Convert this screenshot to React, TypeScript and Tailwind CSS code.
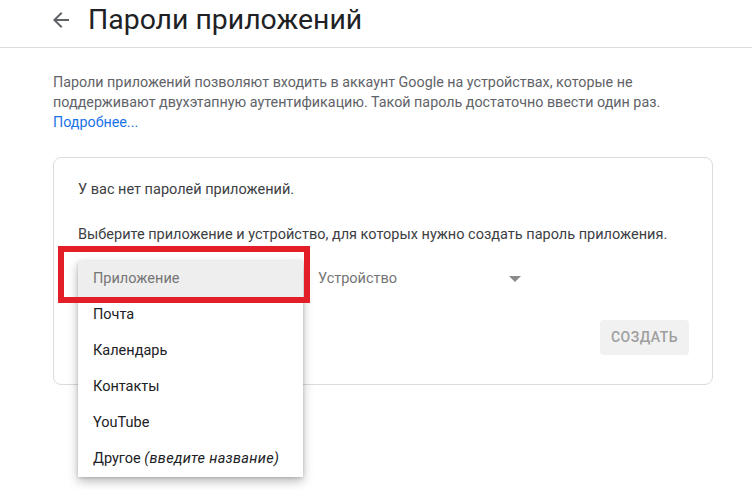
import React from "react";

export default function App() {
  const items = ["Почта", "Календарь", "Контакты", "YouTube"];
  return (
    <div className="w-[752px] h-[490px] bg-white overflow-hidden font-['Roboto',_'Noto_Sans',_sans-serif]">
      <header className="h-[48px] border-b border-[#dadce0] flex items-start pl-[49px] pt-[2px]">
        <svg width="24" height="24" viewBox="0 0 24 24" className="mt-[6px] shrink-0">
          <path d="M20 11H7.83l5.59-5.59L12 4l-8 8 8 8 1.41-1.41L7.83 13H20v-2z" fill="#5f6368" />
        </svg>
        <h1 className="ml-[15px] text-[28.4px] leading-[36px] text-[#202124] font-normal">Пароли приложений</h1>
      </header>
      <main className="pl-[53px] pt-[24px]">
        <p className="w-[660px] text-[14.3px] leading-5 text-[#5f6368]">
          Пароли приложений позволяют входить в аккаунт Google на устройствах, которые не поддерживают двухэтапную аутентификацию. Такой пароль достаточно ввести один раз.
          <br />
          <a className="text-[#1a73e8]">Подробнее...</a>
        </p>
        <section className="mt-[25px] w-[660px] border border-[#dadce0] rounded-lg pt-[22px] pl-[24px] pr-[23px] pb-[29px]">
          <p className="text-[14.5px] leading-5 text-[#3c4043]">У вас нет паролей приложений.</p>
          <p className="mt-[25px] text-[14.5px] leading-5 text-[#3c4043]">
            Выберите приложение и устройство, для которых нужно создать пароль приложения.
          </p>
          <div className="mt-[14px] h-[40px] flex items-center gap-[16px]">
            <div className="relative w-[224px] h-[40px]">
              <div className="absolute left-0 top-[2px] w-[225px] bg-white shadow-[0_4px_10px_rgba(0,0,0,0.28),0_1px_3px_rgba(0,0,0,0.15)] z-10">
                <div className="h-[36px] flex items-center px-[15px] bg-[#eeeeee] text-[14.5px] text-[#757575]">Приложение</div>
                {items.map((t) => (
                  <div key={t} className="h-[36px] flex items-center px-[15px] text-[14.5px] text-[#202124]">{t}</div>
                ))}
                <div className="h-[36px] flex items-center px-[15px] text-[14.5px] text-[#202124]">
                  Другое&nbsp;<i className="italic tracking-[0.3px]">(введите название)</i>
                </div>
              </div>
              <div className="absolute left-[-20px] top-[-13px] w-[252px] h-[57px] border-[6px] border-[#e41e26] z-20"></div>
            </div>
            <div className="w-[212px] h-[40px] flex items-center justify-between pr-[9px]">
              <span className="text-[14.5px] text-[#757575]">Устройство</span>
              <svg width="12" height="6" viewBox="0 0 12 6">
                <polygon points="0,0 12,0 6,6" fill="#8a8a8a" />
              </svg>
            </div>
          </div>
          <div className="mt-[21px] flex justify-end">
            <button className="h-[35px] w-[89px] bg-[#f1f1f1] rounded text-[14px] font-medium tracking-[0.5px] text-[#9e9e9e]">
              СОЗДАТЬ
            </button>
          </div>
        </section>
      </main>
    </div>
  );
}
